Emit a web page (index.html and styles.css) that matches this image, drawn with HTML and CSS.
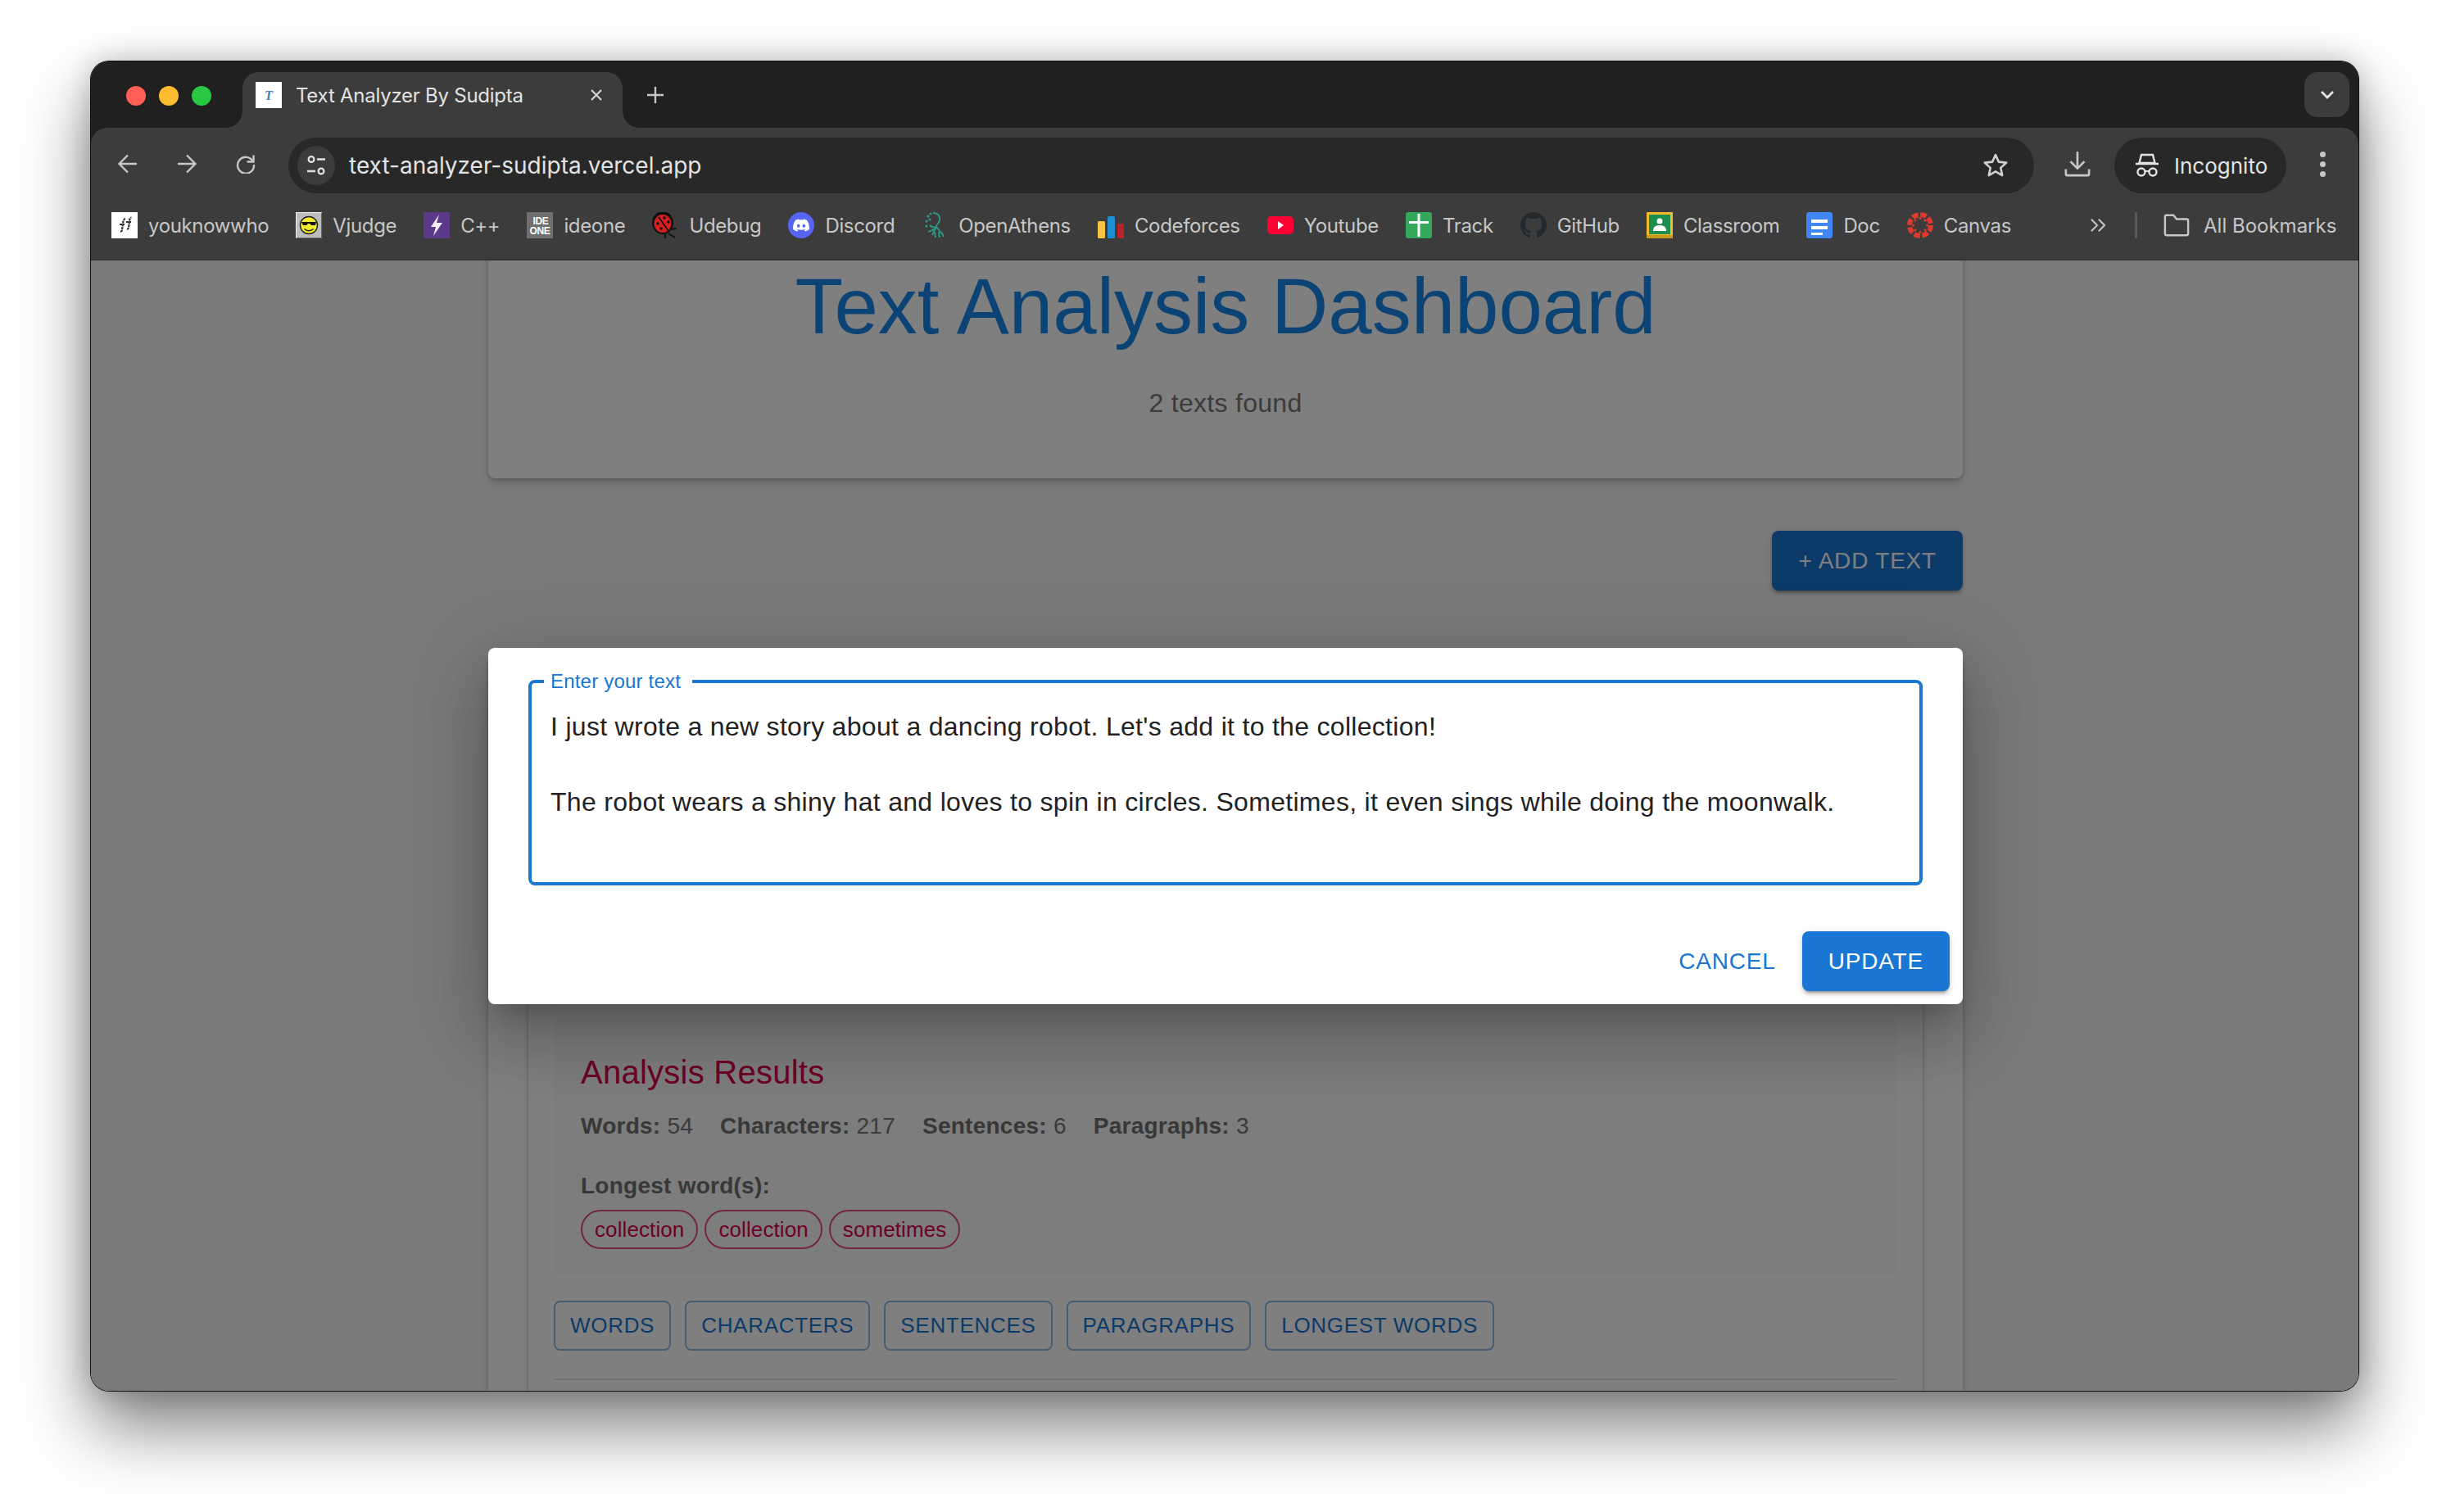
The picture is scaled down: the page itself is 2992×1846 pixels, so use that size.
FILE: index.html
```html
<!DOCTYPE html>
<html lang="en">
<head>
<meta charset="utf-8">
<title>Text Analyzer By Sudipta</title>
<link rel="stylesheet" href="styles.css">
</head>
<body>
<div class="window">

  <!-- tab strip -->
  <div class="tabstrip">
    <div class="lights">
      <span class="light red"></span>
      <span class="light yellow"></span>
      <span class="light green"></span>
    </div>
    <div class="tab">
      <svg class="favicon" viewBox="0 0 32 32"><rect width="32" height="32" fill="#fff"/><text x="16" y="22" text-anchor="middle" class="fav-t">T</text></svg>
      <span class="tab-title">Text Analyzer By Sudipta</span>
      <svg class="tab-close" viewBox="0 0 16 16"><path d="M2 2l12 12M14 2L2 14" fill="none" stroke="#d6d6d6" stroke-width="2.2"/></svg>
    </div>
    <svg class="new-tab" viewBox="0 0 22 22"><path d="M11 1v20M1 11h20" fill="none" stroke="#c7c7c7" stroke-width="2.4"/></svg>
    <div class="tab-menu">
      <svg viewBox="0 0 18 12" class="tab-menu-icon"><path d="M2 2l7 7 7-7" fill="none" stroke="#e3e3e3" stroke-width="2.8"/></svg>
    </div>
  </div>

  <!-- toolbar -->
  <div class="toolbar">
    <div class="tool">
      <svg viewBox="0 0 24 24"><path d="M23 12H2M12 1.5L1.5 12 12 22.5" fill="none" stroke="#c7c7c7" stroke-width="2.4"/></svg>
    </div>
    <div class="tool">
      <svg viewBox="0 0 24 24"><path d="M1 12h21M12 1.5L22.5 12 12 22.5" fill="none" stroke="#c7c7c7" stroke-width="2.4"/></svg>
    </div>
    <div class="tool">
      <svg viewBox="0 0 24 24"><path d="M20.500 8.500A10 10 0 1 0 22 13" fill="none" stroke="#c7c7c7" stroke-width="2.4"/><path d="M21.500 1.500v8h-8" fill="none" stroke="#c7c7c7" stroke-width="2.4"/></svg>
    </div>
    <div class="omnibox">
      <div class="site-chip">
        <svg viewBox="0 0 24 26"><circle cx="6" cy="5.500" r="3.400" fill="none" stroke="#e3e3e3" stroke-width="2.200"/><path d="M13 5.500h10M1 20h10" stroke="#e3e3e3" stroke-width="2.400"/><circle cx="18" cy="20" r="3.400" fill="none" stroke="#e3e3e3" stroke-width="2.200"/></svg>
      </div>
      <span class="url">text-analyzer-sudipta.vercel.app</span>
      <svg class="star" viewBox="0 0 32 32"><path d="M16 3l3.900 8.600 9.300 1-6.900 6.300 1.900 9.200L16 23.400l-8.200 4.700 1.900-9.200L2.800 12.600l9.300-1z" fill="none" stroke="#d0d0d0" stroke-width="2.600" stroke-linejoin="round"/></svg>
    </div>
    <div class="tool download">
      <svg viewBox="0 0 34 34"><path d="M17 1v21M8 14l9 9 9-9" fill="none" stroke="#c7c7c7" stroke-width="2.800"/><path d="M2 24v6a2 2 0 0 0 2 2h26a2 2 0 0 0 2-2v-6" fill="none" stroke="#c7c7c7" stroke-width="2.800"/></svg>
    </div>
    <div class="incognito">
      <svg viewBox="0 0 30 30"><path d="M8 2h14l2.500 10h-19z" fill="none" stroke="#e3e3e3" stroke-width="2.400"/><path d="M1 13h28" stroke="#e3e3e3" stroke-width="2.600"/><circle cx="8" cy="23" r="4.500" fill="none" stroke="#e3e3e3" stroke-width="2.400"/><circle cx="22" cy="23" r="4.500" fill="none" stroke="#e3e3e3" stroke-width="2.400"/><path d="M12.500 22h5" stroke="#e3e3e3" stroke-width="2.200"/></svg>
      <span>Incognito</span>
    </div>
    <div class="tool menu">
      <span class="dot"></span><span class="dot"></span><span class="dot"></span>
    </div>
  </div>

  <!-- bookmarks bar -->
  <div class="bookmarks">
    <div class="bm">
      <svg viewBox="0 0 32 32"><rect width="32" height="32" fill="#fff"/><path d="M11 24c2 0 2-2 2.500-6l1-7c.4-2 1.500-3 2.500-3M10 15h6M19 21c2 0 2-2 2.500-6l.8-6c.3-1.500 1.200-2.500 2.200-2.500M18 12h6" fill="none" stroke="#333" stroke-width="2.200" stroke-dasharray="3 .8"/></svg>
      <span>youknowwho</span>
    </div>
    <div class="bm">
      <svg viewBox="0 0 32 32"><rect width="32" height="32" fill="#bdbdbd"/><path d="M.5 31.500V.5h31" fill="none" stroke="#efefef"/><path d="M1 31.500h30.500V1" fill="none" stroke="#6a6a6a"/><circle cx="16" cy="16" r="10.500" fill="#f2ea2c" stroke="#222" stroke-width="1.400"/><path d="M7 12h18l-1 4h-5l-2-2h-2l-2 2H9z" fill="#111"/><path d="M10.500 20.500c3 3 8 3 11 0" fill="none" stroke="#222" stroke-width="1.600"/></svg>
      <span>Vjudge</span>
    </div>
    <div class="bm">
      <svg viewBox="0 0 32 32"><rect width="32" height="32" fill="#5b3a8c"/><path d="M19 3L9 18h6l-3 11 11-16h-7z" fill="#f4f0f8"/></svg>
      <span>C++</span>
    </div>
    <div class="bm">
      <svg viewBox="0 0 32 32"><rect width="32" height="32" fill="#6f6f6f"/><text x="17" y="15" text-anchor="middle" class="ide-mark">IDE</text><text x="16" y="27" text-anchor="middle" class="ide-mark">ONE</text></svg>
      <span>ideone</span>
    </div>
    <div class="bm">
      <svg viewBox="0 0 32 32"><path d="M20 26l8 5M16 27v5M24 21l6-1" stroke="#111" stroke-width="2"/><ellipse cx="13" cy="13" rx="13" ry="14" fill="#111"/><ellipse cx="13" cy="14" rx="10.500" ry="11" fill="#d8201f"/><path d="M8 6l12 17" stroke="#111" stroke-width="1.600"/><circle cx="15" cy="7" r="1.800" fill="#111"/><circle cx="20" cy="12" r="1.800" fill="#111"/><circle cx="7" cy="14" r="1.800" fill="#111"/><circle cx="11" cy="20" r="1.800" fill="#111"/></svg>
      <span>Udebug</span>
    </div>
    <div class="bm">
      <svg viewBox="0 0 32 32"><circle cx="16" cy="16" r="16" fill="#5865f2"/><g transform="translate(6 6) scale(.833)"><path fill="#fff" d="M20.317 4.37a19.791 19.791 0 0 0-4.885-1.515.074.074 0 0 0-.079.037c-.21.375-.444.864-.608 1.25a18.27 18.27 0 0 0-5.487 0 12.64 12.64 0 0 0-.617-1.25.077.077 0 0 0-.079-.037A19.736 19.736 0 0 0 3.677 4.37a.07.07 0 0 0-.032.027C.533 9.046-.32 13.58.099 18.057a.082.082 0 0 0 .031.057 19.9 19.9 0 0 0 5.993 3.03.078.078 0 0 0 .084-.028 14.09 14.09 0 0 0 1.226-1.994.076.076 0 0 0-.041-.106 13.107 13.107 0 0 1-1.872-.892.077.077 0 0 1-.008-.128 10.2 10.2 0 0 0 .372-.292.074.074 0 0 1 .077-.01c3.928 1.793 8.18 1.793 12.062 0a.074.074 0 0 1 .078.01c.12.098.246.198.373.292a.077.077 0 0 1-.006.127 12.299 12.299 0 0 1-1.873.892.077.077 0 0 0-.041.107c.36.698.772 1.362 1.225 1.993a.076.076 0 0 0 .084.028 19.839 19.839 0 0 0 6.002-3.03.077.077 0 0 0 .032-.054c.5-5.177-.838-9.674-3.549-13.66a.061.061 0 0 0-.031-.03zM8.02 15.33c-1.183 0-2.157-1.085-2.157-2.419 0-1.333.956-2.419 2.157-2.419 1.21 0 2.176 1.096 2.157 2.42 0 1.333-.956 2.418-2.157 2.418zm7.975 0c-1.183 0-2.157-1.085-2.157-2.419 0-1.333.955-2.419 2.157-2.419 1.21 0 2.176 1.096 2.157 2.42 0 1.333-.946 2.418-2.157 2.418z"/></g></svg>
      <span>Discord</span>
    </div>
    <div class="bm">
      <svg viewBox="-2 0 32 32"><g fill="none" stroke="#2c9c8a" stroke-width="1.800"><path d="M12 1c6 0 9 4 8 9-1 4-4 5-4 8l5 6c2 2 4 3 3 6"/><path d="M16 18c-3 1-6 0-8-2M6 24c3-1 6-2 9-4l-4 8M14 24l1 7M19 24l1 7"/></g><g fill="#2c9c8a"><circle cx="6" cy="5" r="1.500"/><circle cx="8" cy="9" r="1.500"/><circle cx="4" cy="11" r="1.500"/><circle cx="4" cy="17" r="1.500"/><circle cx="9" cy="2" r="1.300"/></g></svg>
      <span>OpenAthens</span>
    </div>
    <div class="bm">
      <svg viewBox="0 0 32 32"><rect x="0" y="11" width="9" height="21" rx="1.500" fill="#f6c343"/><rect x="12" y="5" width="9" height="27" rx="1.500" fill="#1b8fd2"/><rect x="24" y="14" width="8" height="18" rx="1.500" fill="#b8232b"/></svg>
      <span>Codeforces</span>
    </div>
    <div class="bm">
      <svg viewBox="0 0 32 32"><rect x="0" y="5" width="32" height="22" rx="5" fill="#ff0033"/><path d="M13 11l7 5-7 5z" fill="#fff"/></svg>
      <span>Youtube</span>
    </div>
    <div class="bm">
      <svg viewBox="0 0 32 32"><rect width="32" height="32" rx="3" fill="#34a85a"/><path d="M14.500 2h3v28h-3zM4 11h24v3H4z" fill="#fff"/></svg>
      <span>Track</span>
    </div>
    <div class="bm">
      <svg viewBox="0 0 16 16"><path fill="#24292e" d="M8 0C3.580 0 0 3.580 0 8c0 3.540 2.290 6.530 5.470 7.590.4.070.55-.17.55-.38 0-.19-.01-.82-.01-1.490-2.010.37-2.530-.49-2.690-.94-.09-.23-.48-.94-.82-1.130-.28-.15-.68-.52-.01-.53.63-.01 1.080.58 1.230.82.72 1.210 1.870.87 2.330.66.07-.52.28-.87.51-1.070-1.780-.2-3.640-.89-3.640-3.950 0-.87.31-1.590.82-2.150-.08-.2-.36-1.020.08-2.120 0 0 .67-.21 2.200.82.64-.18 1.320-.27 2-.27.68 0 1.360.09 2 .27 1.530-1.040 2.200-.82 2.200-.82.44 1.100.16 1.920.08 2.120.51.56.82 1.270.82 2.150 0 3.070-1.870 3.750-3.650 3.950.29.25.54.73.54 1.480 0 1.070-.01 1.930-.01 2.200 0 .21.15.46.55.38A8.013 8.013 0 0 0 16 8c0-4.420-3.580-8-8-8z"/></svg>
      <span>GitHub</span>
    </div>
    <div class="bm">
      <svg viewBox="0 0 32 32"><rect width="32" height="32" fill="#f1bb2e"/><rect x="3" y="3" width="26" height="24" fill="#1e8e4e"/><rect y="28" width="32" height="4" fill="#c99a1e"/><circle cx="16" cy="11" r="3.500" fill="#fff"/><path d="M8 23c0-5 3-7 8-7s8 2 8 7z" fill="#fff"/></svg>
      <span>Classroom</span>
    </div>
    <div class="bm">
      <svg viewBox="0 0 32 32"><rect width="32" height="32" rx="3" fill="#4285f4"/><path d="M6 9h20v4H6zM6 17h20v4H6zM6 25h14v3H6z" fill="#fff"/></svg>
      <span>Doc</span>
    </div>
    <div class="bm">
      <svg viewBox="0 0 32 32"><circle cx="16" cy="16" r="13" fill="none" stroke="#e03a2e" stroke-width="6" stroke-dasharray="7.500 2.700"/><circle cx="16" cy="7.500" r="1.500" fill="#e03a2e"/><circle cx="16" cy="24.500" r="1.500" fill="#e03a2e"/><circle cx="7.500" cy="16" r="1.500" fill="#e03a2e"/><circle cx="24.500" cy="16" r="1.500" fill="#e03a2e"/><circle cx="10" cy="10" r="1.500" fill="#e03a2e"/><circle cx="22" cy="10" r="1.500" fill="#e03a2e"/><circle cx="10" cy="22" r="1.500" fill="#e03a2e"/><circle cx="22" cy="22" r="1.500" fill="#e03a2e"/></svg>
      <span>Canvas</span>
    </div>
    <svg class="bm-more" viewBox="0 0 22 20"><path d="M2 2l8 8-8 8M12 2l8 8-8 8" fill="none" stroke="#c7c7c7" stroke-width="2.200"/></svg>
    <span class="bm-sep"></span>
    <div class="bm bm-all">
      <svg viewBox="0 0 34 30"><path d="M2 4a2 2 0 0 1 2-2h9l4 5h13a2 2 0 0 1 2 2v17a2 2 0 0 1-2 2H4a2 2 0 0 1-2-2z" fill="none" stroke="#c7c7c7" stroke-width="2.600"/></svg>
      <span>All Bookmarks</span>
    </div>
  </div>

  <!-- page -->
  <div class="page">
    <div class="container">
      <div class="card header-card">
        <h1>Text Analysis Dashboard</h1>
        <p class="count">2 texts found</p>
      </div>
      <div class="add-row">
        <div class="btn btn-contained">+ Add Text</div>
      </div>
      <div class="card list-card">
        <div class="text-card">
          <div class="results">
            <h2>Analysis Results</h2>
            <div class="stats">
              <span><b>Words:</b> 54</span>
              <span><b>Characters:</b> 217</span>
              <span><b>Sentences:</b> 6</span>
              <span><b>Paragraphs:</b> 3</span>
            </div>
            <div class="longest-label">Longest word(s):</div>
            <div class="chips">
              <span class="chip">collection</span>
              <span class="chip">collection</span>
              <span class="chip">sometimes</span>
            </div>
          </div>
          <div class="actions">
            <div class="btn-small">Words</div>
            <div class="btn-small">Characters</div>
            <div class="btn-small">Sentences</div>
            <div class="btn-small">Paragraphs</div>
            <div class="btn-small">Longest Words</div>
          </div>
          <div class="divider"></div>
        </div>
      </div>
    </div>

    <div class="scrim"></div>

    <div class="dialog">
      <fieldset class="field">
        <legend>Enter your text</legend>
        <div class="field-text">I just wrote a new story about a dancing robot. Let's add it to the collection!<br><br>The robot wears a shiny hat and loves to spin in circles. Sometimes, it even sings while doing the moonwalk.</div>
      </fieldset>
      <div class="dialog-actions">
        <div class="btn btn-text">Cancel</div>
        <div class="btn btn-contained">Update</div>
      </div>
    </div>
  </div>

</div>
</body>
</html>
```

FILE: styles.css
```css
/* desktop + browser window */
html, body {margin: 0; padding: 0;}
body {
  height: 1846px;
  padding: 75px 0 0 111px;
  box-sizing: border-box;
  overflow: hidden;
  background: #fff;
  font-family: "Liberation Sans", sans-serif;
}
.window {
  position: relative;
  display: flex;
  flex-direction: column;
  width: 2768px;
  height: 1623px;
  border-radius: 22px;
  overflow: hidden;
  background: #202020;
}
body::before {
  content: "";
  position: absolute;
  left: 111px;
  top: 75px;
  width: 2768px;
  height: 1623px;
  border-radius: 22px;
  box-shadow: 0 0 0 1px #111, 0 44px 84px rgba(0,0,0,.5), 0 0 36px rgba(0,0,0,.22);
}

/* tab strip */
.tabstrip {
  display: flex;
  align-items: flex-end;
  height: 81px;
  flex: none;
  background: #202020;
  font-family: Inter, sans-serif;
}
.lights {display: flex; gap: 16px; padding: 0 38px 27px 43px;}
.light {width: 24px; height: 24px; border-radius: 50%;}
.red {background: #ff5f57;}
.yellow {background: #febc2e;}
.green {background: #28c840;}
.tab {
  position: relative;
  display: flex;
  align-items: center;
  width: 464px;
  height: 68px;
  box-sizing: border-box;
  padding: 0 24px 12px 16px;
  background: #3c3c3c;
  border-radius: 20px 20px 0 0;
}
.tab::before, .tab::after {
  content: "";
  position: absolute;
  bottom: 0;
  width: 20px;
  height: 20px;
}
.tab::before {left: -20px; background: radial-gradient(circle at 0 0, transparent 19.500px, #3c3c3c 20px);}
.tab::after {right: -20px; background: radial-gradient(circle at 100% 0, transparent 19.500px, #3c3c3c 20px);}
.favicon {width: 32px; height: 32px; flex: none;}
.fav-t {font: italic bold 16px "Liberation Serif", serif; fill: #3f86b5;}
.tab-title {margin-left: 17px; font-size: 24px; letter-spacing: -.25px; color: #e3e3e3; white-space: nowrap;}
.tab-close {width: 16px; height: 16px; margin-left: auto;}
.new-tab {width: 22px; height: 22px; margin: 0 0 29px 29px;}
.tab-menu {
  display: flex;
  align-items: center;
  justify-content: center;
  width: 55px;
  height: 55px;
  margin: 0 11px 13px auto;
  background: #3c3c3c;
  border-radius: 16px;
}
.tab-menu-icon {width: 18px; height: 12px;}

/* toolbar */
.toolbar {
  display: flex;
  align-items: center;
  flex: none;
  height: 80px;
  padding: 12px 20px 0 21px;
  box-sizing: border-box;
  background: #3c3c3c;
  border-radius: 20px 20px 0 0;
  font-family: Inter, sans-serif;
}
.tool {
  display: flex;
  align-items: center;
  justify-content: center;
  width: 48px;
  height: 48px;
  margin-right: 24px;
  margin-top: -4px;
  flex: none;
}
.tool svg {width: 24px; height: 24px;}
.omnibox {
  display: flex;
  align-items: center;
  flex: 1;
  height: 68px;
  margin-left: 4px;
  padding: 0 31px 0 11px;
  background: #282828;
  border-radius: 34px;
}
.site-chip {
  display: flex;
  align-items: center;
  justify-content: center;
  width: 46px;
  height: 48px;
  background: #3c3c3c;
  border-radius: 50%;
}
.site-chip svg {width: 24px; height: 26px;}
.url {margin-left: 17px; font-size: 28px; color: #e3e3e3;}
.star {width: 32px; height: 32px; margin-left: auto;}
.download {margin: -4px 21px 0 29px;}
.download svg {width: 32px; height: 32px;}
.incognito {
  display: flex;
  align-items: center;
  gap: 18px;
  width: 210px;
  height: 68px;
  box-sizing: border-box;
  padding-left: 25px;
  background: #282828;
  border-radius: 34px;
  font-size: 26px;
  color: #e3e3e3;
  flex: none;
}
.incognito svg {width: 30px; height: 30px;}
.menu {
  flex-direction: column;
  gap: 5px;
  margin: -4px 0 0 20px;
}
.dot {width: 7px; height: 7px; border-radius: 50%; background: #c7c7c7;}

/* bookmarks */
.bookmarks {
  display: flex;
  align-items: center;
  flex: none;
  height: 82px;
  box-sizing: border-box;
  padding: 0 0 2px 25px;
  background: #3c3c3c;
  border-bottom: 2px solid #333;
  font-family: Inter, sans-serif;
  font-size: 24px;
  letter-spacing: -.35px;
  color: #c7c7c7;
}
.bm {display: flex; align-items: center; gap: 13px; margin-right: 33px; white-space: nowrap;}
.bm svg {width: 32px; height: 32px; flex: none;}
.ide-mark {font: bold 12px "Liberation Sans", sans-serif; fill: #fff;}
.bm-more {width: 20px; height: 18px; margin-left: 63px; flex: none;}
.bm-sep {width: 3px; height: 32px; margin: 0 32px 0 35px; background: #5a5a5a; flex: none;}
.bm-all {margin-right: 0; gap: 17px; letter-spacing: 0;}

/* page */
.page {
  position: relative;
  flex: 1;
  overflow: hidden;
  background: #f5f5f5;
}
.container {width: 1800px; margin-left: 485px;}
.card {
  background: #fff;
  border-radius: 8px;
  box-shadow: 0 6px 12px -2px rgba(0,0,0,.2), 0 2px 4px rgba(0,0,0,.14);
}
.header-card {
  margin-top: -32px;
  padding: 32px 0 68px;
  text-align: center;
}
h1 {
  margin: 0 0 38px;
  font-size: 96px;
  font-weight: 400;
  line-height: 112px;
  color: #1686ea;
}
.count {
  margin: 0;
  font-size: 32px;
  line-height: 48px;
  letter-spacing: .3px;
  color: #777;
}
.add-row {display: flex; justify-content: flex-end; margin: 64px 0 80px;}
.btn {
  padding: 0 32px;
  height: 73px;
  display: flex;
  align-items: center;
  border-radius: 8px;
  font-size: 28px;
  letter-spacing: .8px;
  text-transform: uppercase;
}
.btn-contained {
  background: #1976d2;
  color: #fff;
  box-shadow: 0 6px 2px -4px rgba(0,0,0,.2), 0 4px 4px rgba(0,0,0,.14), 0 2px 10px rgba(0,0,0,.12);
}
.btn-text {color: #1976d2;}
.list-card {padding: 49px 49px 0;}
.text-card {
  padding: 394px 32px 0 31px;
  background: #fff;
  border-radius: 8px;
  box-shadow: 0 1px 6px rgba(0,0,0,.25);
  height: 900px;
}
.results {
  padding: 33px 33px 32px;
  background: #fafafa;
  border-radius: 8px;
}
h2 {
  margin: 0 0 14px;
  font-size: 40px;
  font-weight: 400;
  line-height: 64px;
  letter-spacing: .25px;
  color: #dc004e;
}
.stats {
  display: flex;
  gap: 33px;
  font-size: 28px;
  line-height: 40px;
  letter-spacing: .25px;
  color: #777;
}
.stats b, .longest-label {color: #707070;}
.longest-label {
  margin-top: 33px;
  font-size: 28px;
  font-weight: 700;
  line-height: 40px;
  letter-spacing: .25px;
}
.chips {display: flex; gap: 8px; margin-top: 9px;}
.chip {
  height: 48px;
  padding: 0 15px;
  box-sizing: border-box;
  border: 2px solid rgba(220,0,78,.7);
  border-radius: 24px;
  font-size: 26px;
  line-height: 44px;
  letter-spacing: .1px;
  color: #dc004e;
}
.actions {display: flex; gap: 17px; margin-top: 31px;}
.btn-small {
  height: 61px;
  padding: 0 18px;
  box-sizing: border-box;
  border: 2px solid rgba(25,118,210,.5);
  border-radius: 8px;
  font-size: 26px;
  line-height: 57px;
  letter-spacing: .7px;
  text-transform: uppercase;
  color: #1976d2;
}
.divider {height: 2px; margin-top: 34px; background: #e0e0e0;}

/* modal */
.scrim {position: absolute; inset: 0; background: rgba(0,0,0,.5);}
.dialog {
  position: absolute;
  left: 485px;
  top: 473px;
  width: 1800px;
  box-sizing: border-box;
  padding: 27px 49px 16px;
  background: #fff;
  border-radius: 8px;
  box-shadow: 0 22px 30px -14px rgba(0,0,0,.2), 0 48px 76px 6px rgba(0,0,0,.14), 0 18px 92px 16px rgba(0,0,0,.12);
}
.field {
  margin: 0;
  padding: 18px 26px 75px 23px;
  min-width: 0;
  border: 4px solid #1976d2;
  border-radius: 8px;
}
.field legend {
  margin-left: -8px;
  padding: 0 14px 0 8px;
  font-size: 24px;
  line-height: 28px;
  letter-spacing: .2px;
  color: #1976d2;
}
.field-text {
  font-size: 32px;
  line-height: 46px;
  letter-spacing: .3px;
  color: #222;
}
.dialog-actions {
  display: flex;
  justify-content: flex-end;
  margin: 56px -33px 0 0;
}
```
